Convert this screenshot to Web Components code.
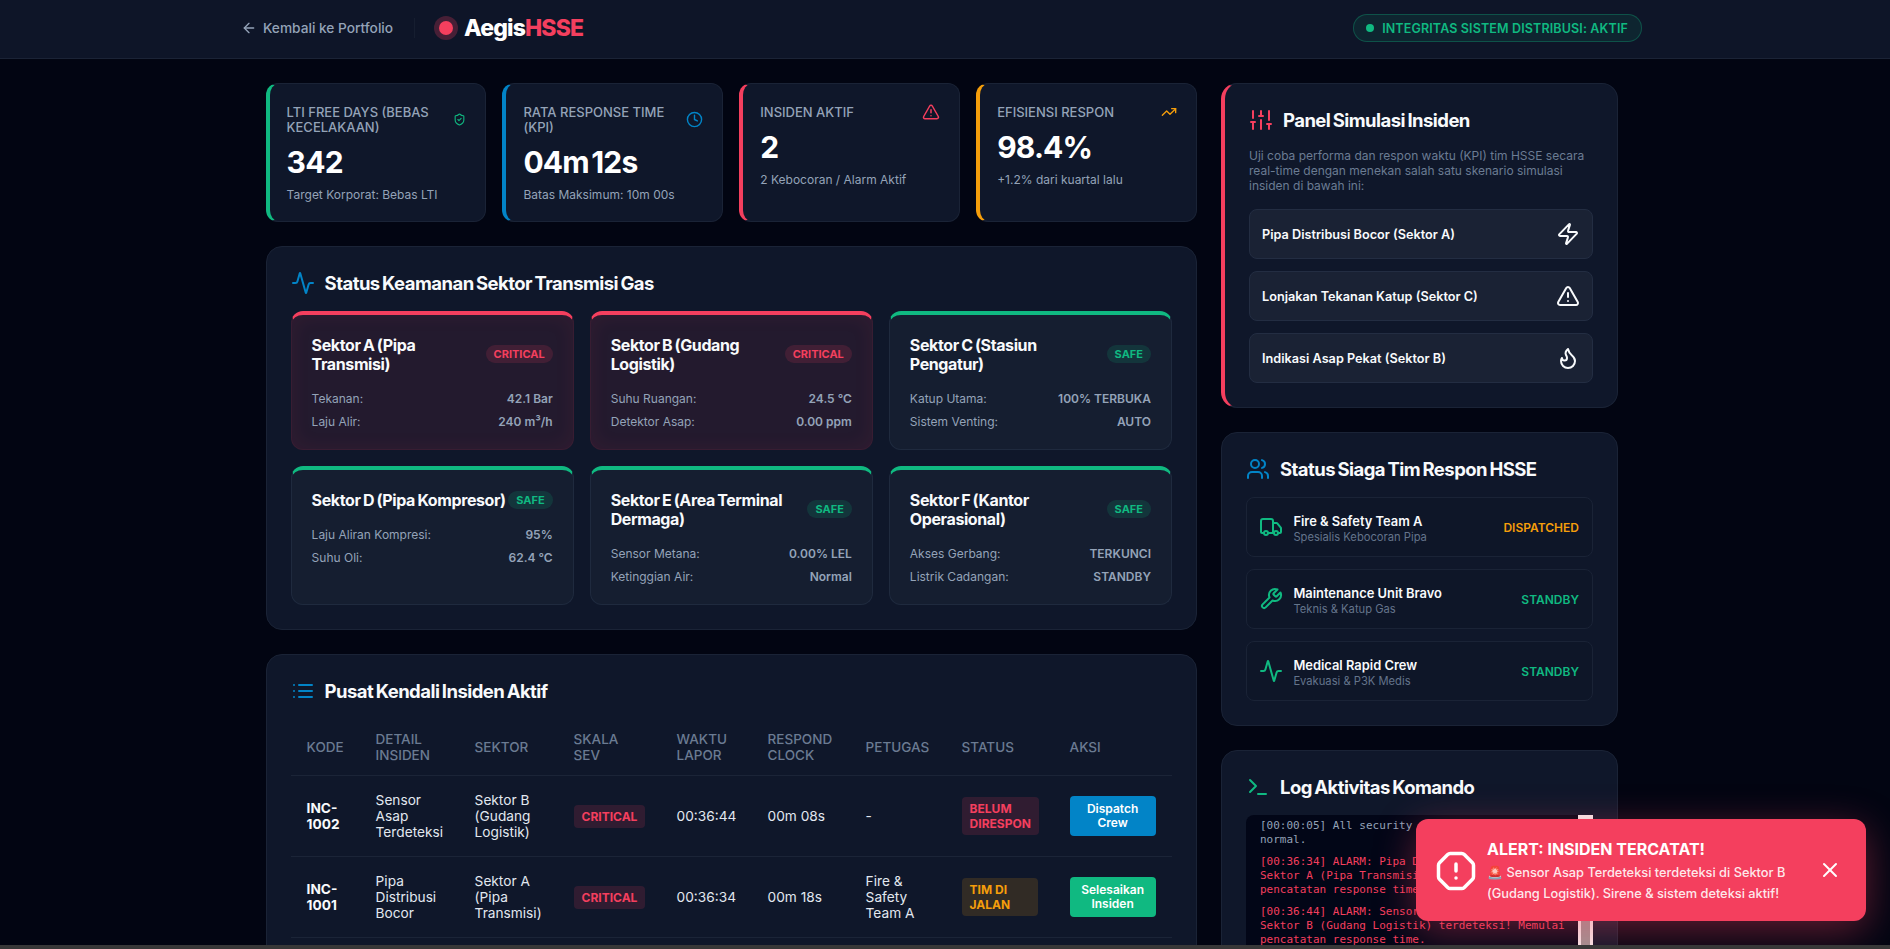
<!DOCTYPE html>
<html lang="id"><head><meta charset="utf-8"><title>AegisHSSE</title>
<style>
html,body{margin:0;padding:0;height:949px;overflow:hidden;background:#020512}
body{font-family:Inter,"Noto Sans",sans-serif;color:#f8fafc}
</style></head>
<body>
<aegis-app>
  <app-header></app-header>
  <div slot="left">
    <stat-grid>
      <stat-card accent="#10b981" icon="shield" icon-size="13" label="LTI FREE DAYS (BEBAS KECELAKAAN)" value="342" sub="Target Korporat: Bebas LTI"></stat-card>
      <stat-card accent="#0284c7" icon="clock" icon-size="17" label="RATA RESPONSE TIME (KPI)" value="04m 12s" sub="Batas Maksimum: 10m 00s"></stat-card>
      <stat-card accent="#f43f5e" icon="triangle" icon-size="18" label="INSIDEN AKTIF" value="2" sub="2 Kebocoran / Alarm Aktif"></stat-card>
      <stat-card accent="#f59e0b" icon="trending" icon-size="16" label="EFISIENSI RESPON" value="98.4%" sub="+1.2% dari kuartal lalu"></stat-card>
    </stat-grid>
    <panel-card icon="activity" icon-color="#0284c7" heading="Status Keamanan Sektor Transmisi Gas">
      <sector-grid>
        <sector-card state="critical" name="Sektor A (Pipa Transmisi)" a="Tekanan:" av="42.1 Bar" b="Laju Alir:" bv="240 m³/h"></sector-card>
        <sector-card state="critical" name="Sektor B (Gudang Logistik)" a="Suhu Ruangan:" av="24.5 °C" b="Detektor Asap:" bv="0.00 ppm"></sector-card>
        <sector-card state="safe" name="Sektor C (Stasiun Pengatur)" a="Katup Utama:" av="100% TERBUKA" b="Sistem Venting:" bv="AUTO"></sector-card>
        <sector-card state="safe" nowrap name="Sektor D (Pipa Kompresor)" a="Laju Aliran Kompresi:" av="95%" b="Suhu Oli:" bv="62.4 °C"></sector-card>
        <sector-card state="safe" name="Sektor E (Area Terminal Dermaga)" a="Sensor Metana:" av="0.00% LEL" b="Ketinggian Air:" bv="Normal"></sector-card>
        <sector-card state="safe" name="Sektor F (Kantor Operasional)" a="Akses Gerbang:" av="TERKUNCI" b="Listrik Cadangan:" bv="STANDBY"></sector-card>
      </sector-grid>
    </panel-card>
    <panel-card icon="list" icon-color="#0284c7" heading="Pusat Kendali Insiden Aktif">
      <incident-table></incident-table>
    </panel-card>
  </div>
  <div slot="right">
    <panel-card icon="sliders" icon-color="#f43f5e" heading="Panel Simulasi Insiden" alert>
      <sim-panel></sim-panel>
    </panel-card>
    <panel-card icon="users" icon-color="#0284c7" heading="Status Siaga Tim Respon HSSE">
      <team-list>
        <team-row icon="truck" name="Fire &amp; Safety Team A" role="Spesialis Kebocoran Pipa" status="DISPATCHED" tone="#f59e0b"></team-row>
        <team-row icon="wrench" name="Maintenance Unit Bravo" role="Teknis &amp; Katup Gas" status="STANDBY" tone="#10b981"></team-row>
        <team-row icon="activity" name="Medical Rapid Crew" role="Evakuasi &amp; P3K Medis" status="STANDBY" tone="#10b981"></team-row>
      </team-list>
    </panel-card>
    <panel-card icon="terminal" icon-color="#10b981" heading="Log Aktivitas Komando">
      <log-console></log-console>
    </panel-card>
  </div>
  <toast-alert slot="toast"></toast-alert>
</aegis-app>
<script>
const I={
arrow:'<path d="m12 19-7-7 7-7"/><path d="M19 12H5"/>',
shield:'<path d="M20 13c0 5-3.5 7.5-7.66 8.95a1 1 0 0 1-.67-.01C7.5 20.5 4 18 4 13V6a1 1 0 0 1 1-1c2 0 4.5-1.2 6.24-2.72a1.17 1.17 0 0 1 1.52 0C14.51 3.81 17 5 19 5a1 1 0 0 1 1 1z"/><path d="m9 12 2 2 4-4"/>',
clock:'<circle cx="12" cy="12" r="10"/><polyline points="12 6 12 12 16 14"/>',
triangle:'<path d="m21.73 18-8-14a2 2 0 0 0-3.48 0l-8 14A2 2 0 0 0 4 21h16a2 2 0 0 0 1.73-3"/><path d="M12 9v4"/><path d="M12 17h.01"/>',
trending:'<path d="M16 7h6v6"/><path d="m22 7-8.5 8.5-5-5L2 17"/>',
sliders:'<path d="M4 21v-7"/><path d="M4 10V3"/><path d="M12 21v-9"/><path d="M12 8V3"/><path d="M20 21v-5"/><path d="M20 12V3"/><path d="M2 14h4"/><path d="M10 8h4"/><path d="M18 16h4"/>',
zap:'<path d="M4 14a1 1 0 0 1-.78-1.63l9.9-10.2a.5.5 0 0 1 .86.46l-1.92 6.02A1 1 0 0 0 13 10h7a1 1 0 0 1 .78 1.63l-9.9 10.2a.5.5 0 0 1-.86-.46l1.92-6.02A1 1 0 0 0 11 14z"/>',
flame:'<path d="M8.5 14.5A2.5 2.5 0 0 0 11 12c0-1.38-.5-2-1-3-1.072-2.143-.224-4.054 2-6 .5 2.5 2 4.9 4 6.5 2 1.6 3 3.5 3 5.5a7 7 0 1 1-14 0c0-1.153.433-2.294 1-3a2.5 2.5 0 0 0 2.5 2.5z"/>',
activity:'<path d="M22 12h-2.48a2 2 0 0 0-1.93 1.46l-2.35 8.36a.25.25 0 0 1-.48 0L9.24 2.18a.25.25 0 0 0-.48 0l-2.35 8.36A2 2 0 0 1 4.49 12H2"/>',
list:'<path d="M3 6h.01"/><path d="M3 12h.01"/><path d="M3 18h.01"/><path d="M8 6h13"/><path d="M8 12h13"/><path d="M8 18h13"/>',
users:'<path d="M16 21v-2a4 4 0 0 0-4-4H6a4 4 0 0 0-4 4v2"/><circle cx="9" cy="7" r="4"/><path d="M22 21v-2a4 4 0 0 0-3-3.87"/><path d="M16 3.13a4 4 0 0 1 0 7.75"/>',
truck:'<path d="M14 18V6a2 2 0 0 0-2-2H4a2 2 0 0 0-2 2v11a1 1 0 0 0 1 1h2"/><path d="M15 18H9"/><path d="M19 18h2a1 1 0 0 0 1-1v-3.65a1 1 0 0 0-.22-.624l-3.48-4.35A1 1 0 0 0 17.52 8H14"/><circle cx="17" cy="18" r="2"/><circle cx="7" cy="18" r="2"/>',
wrench:'<path d="M14.7 6.3a1 1 0 0 0 0 1.4l1.6 1.6a1 1 0 0 0 1.4 0l3.77-3.77a6 6 0 0 1-7.94 7.94l-6.91 6.91a2.12 2.12 0 0 1-3-3l6.91-6.91a6 6 0 0 1 7.94-7.94l-3.76 3.76z"/>',
terminal:'<polyline points="4 17 10 11 4 5"/><line x1="12" x2="20" y1="19" y2="19"/>',
octagon:'<path d="M12 16h.01"/><path d="M12 8v4"/><path d="M15.312 2a2 2 0 0 1 1.414.586l4.688 4.688A2 2 0 0 1 22 8.688v6.624a2 2 0 0 1-.586 1.414l-4.688 4.688a2 2 0 0 1-1.414.586H8.688a2 2 0 0 1-1.414-.586l-4.688-4.688A2 2 0 0 1 2 15.312V8.688a2 2 0 0 1 .586-1.414l4.688-4.688A2 2 0 0 1 8.688 2z"/>',
x:'<path d="M18 6 6 18"/><path d="m6 6 12 12"/>'
};
const svg=(n,s,c,w=2)=>`<svg xmlns="http://www.w3.org/2000/svg" width="${s}" height="${s}" viewBox="0 0 24 24" fill="none" stroke="${c}" stroke-width="${w}" stroke-linecap="round" stroke-linejoin="round" style="display:block;flex:none">${I[n]}</svg>`;
const esc=s=>String(s).replace(/&/g,'&amp;');
function def(tag,render){
  customElements.define(tag,class extends HTMLElement{
    connectedCallback(){
      if(this.shadowRoot)return;
      const a=n=>this.getAttribute(n);
      this.attachShadow({mode:'open'}).innerHTML=render(a,this);
    }
  });
}
const head='font-family:Inter,sans-serif;font-weight:700;';

def('aegis-app',()=>`<style>
:host{display:flex;flex-direction:column;height:949px;position:relative;overflow:hidden}
.page{flex:1;min-height:0;overflow:hidden;position:relative}
.main{display:grid;grid-template-columns:931.4px 397px;column-gap:24px;padding:24px 0 0 265.6px}
::slotted([slot=left]){display:flex;flex-direction:column;gap:24px;min-width:0}
::slotted([slot=right]){display:flex;flex-direction:column;gap:24px;min-width:0}
.strip{height:4px;background:#383838;flex:none}
.toast{position:absolute;right:24px;bottom:24px;z-index:5}
</style><div class="page"><slot></slot><div class="main"><slot name="left"></slot><slot name="right"></slot></div><div class="toast"><slot name="toast"></slot></div></div><div class="strip"></div>`);

def('app-header',()=>`<style>
:host{display:flex;align-items:center;justify-content:space-between;height:56px;background:#0e1528;border-bottom:1px solid #1b2336;padding:0 248px 2px 241px;font-family:Inter,sans-serif}
.l{display:flex;align-items:center}
.back{display:flex;align-items:center;gap:6px;color:#94a3b8;font-size:13.7px;font-weight:500}
.div{width:1px;height:20px;background:#161e30;margin:0 16px 0 21px}
.dot{width:14px;height:14px;border-radius:50%;background:#f43f5e;box-shadow:0 0 0 5px rgba(244,63,94,.25);margin:0 11px 0 8px}
.logo{font-size:23px;font-weight:800;letter-spacing:-.85px;color:#fff}
.logo b{color:#f43f5e;font-weight:800}
.pill{display:flex;align-items:center;gap:8px;height:26px;padding:0 13px 0 12px;border:1px solid rgba(16,185,129,.3);background:rgba(16,185,129,.1);border-radius:14px;color:#10b981;font-size:12.5px;font-weight:600;letter-spacing:.14px}
.pill i{width:8px;height:8px;border-radius:50%;background:#10b981}
</style><div class="l"><div class="back">${svg('arrow',16,'#94a3b8')}<span>Kembali ke Portfolio</span></div><div class="div"></div><div class="dot"></div><div class="logo">Aegis<b>HSSE</b></div></div><div class="pill"><i></i><span>INTEGRITAS SISTEM DISTRIBUSI: AKTIF</span></div>`);

def('stat-grid',()=>`<style>:host{display:grid;grid-template-columns:repeat(4,1fr);gap:16px}</style><slot></slot>`);

def('stat-card',a=>`<style>
:host{display:block;box-sizing:border-box;background:#0f172a;border:1px solid #1a2336;border-left:4px solid ${a('accent')};border-radius:12px;padding:21px 19px 18px 17px}
.top{display:flex;justify-content:space-between;align-items:center;gap:8px}
.lab{font-size:13px;line-height:15px;font-weight:500;color:#94a3b8;flex:1;max-width:150px}
.ic{margin:-3px 0 -1px}
.val{${head}font-size:30px;line-height:40px;color:#fff;margin-top:7px;letter-spacing:-.8px;word-spacing:-4px}
.sub{font-size:12px;line-height:16px;color:#94a3b8;margin-top:5px}
</style><div class="top"><div class="lab">${a('label')}</div><div class="ic">${svg(a('icon'),a('icon-size'),a('accent'))}</div></div><div class="val">${a('value')}</div><div class="sub">${a('sub')}</div>`);

def('panel-card',(a,el)=>{const al=el.hasAttribute('alert');return `<style>
:host{display:block;background:#0f172a;border:1px solid #1a2336;${al?`border-left:4px solid #f43f5e;`:''}border-radius:16px;padding:24px;box-sizing:border-box}
.h{display:flex;align-items:center;gap:10px;height:24px;margin-bottom:16px}
h2{margin:0;${head}font-size:18.5px;line-height:24px;color:#f8fafc;letter-spacing:-.55px;word-spacing:-1.4px}
</style><div class="h">${svg(a('icon'),24,a('icon-color'))}<h2>${esc(a('heading'))}</h2></div><slot></slot>`});

def('sector-grid',()=>`<style>:host{display:grid;grid-template-columns:repeat(3,1fr);gap:16px}</style><slot></slot>`);

def('sector-card',(a,el)=>{const c=a('state')==='critical';const col=c?'#f43f5e':'#10b981';return `<style>
:host{display:block;box-sizing:border-box;border:1px solid ${c?'rgba(244,63,94,.1)':'#1f2a3e'};border-top:4px solid ${col};border-radius:12px;padding:21px 20px 18.6px;background:${c?'#231a2e':'#151e30'};${c?'box-shadow:inset 0 0 20px rgba(244,63,94,.08);':''}}
.t{display:flex;justify-content:space-between;align-items:center;gap:1px;margin-bottom:17px}
.n{${head}font-size:16px;line-height:19.2px;color:#f8fafc;letter-spacing:-.4px;word-spacing:-1px;${el.hasAttribute('nowrap')?'white-space:nowrap;':''}}
.b{flex:none;margin-top:-2px;font-size:11px;font-weight:700;line-height:18px;height:18px;padding:0 8px;border-radius:9px;color:${col};background:${c?'rgba(244,63,94,.15)':'rgba(16,185,129,.15)'}}
.r{display:flex;justify-content:space-between;font-size:12px;line-height:16px;color:#94a3b8}
.r+.r{margin-top:7px}
.r b{font-weight:600}
</style><div class="t"><div class="n">${a('name')}</div><div class="b">${c?'CRITICAL':'SAFE'}</div></div><div class="r"><span>${a('a')}</span><b>${a('av')}</b></div><div class="r"><span>${a('b')}</span><b>${a('bv')}</b></div>`});

def('incident-table',()=>`<style>
:host{display:block;margin-top:16px;font-family:Inter,sans-serif}
table{border-collapse:collapse;table-layout:fixed;width:881px;font-size:13.7px;line-height:16px;color:#e2e8f0}
th{font-weight:500;font-size:13.5px;color:#6b7b92;text-align:left;padding:12px 16px;border-bottom:1px solid #1b2437}
td{padding:16px;border-bottom:1px solid #1b2437;vertical-align:middle}
.k{font-weight:700;color:#f8fafc}
.s{display:inline-block;font-size:12px;font-weight:700;line-height:15px;padding:4px 8px;border-radius:4px;vertical-align:middle}
.red{color:#f43f5e;background:rgba(244,63,94,.15)}
.or{color:#f59e0b;background:rgba(245,158,11,.15)}
.btn{display:block;box-sizing:border-box;width:86px;height:40px;padding:6px 8px;border-radius:4px;color:#fff;font-size:12px;line-height:14px;font-weight:600;text-align:center}
</style><table><colgroup><col style="width:69px"><col style="width:99px"><col style="width:99px"><col style="width:103px"><col style="width:91px"><col style="width:98px"><col style="width:96px"><col style="width:108px"><col style="width:118px"></colgroup>
<thead><tr><th>KODE</th><th>DETAIL INSIDEN</th><th>SEKTOR</th><th>SKALA SEV</th><th>WAKTU LAPOR</th><th>RESPOND CLOCK</th><th>PETUGAS</th><th>STATUS</th><th>AKSI</th></tr></thead>
<tbody>
<tr><td class="k">INC-1002</td><td>Sensor Asap Terdeteksi</td><td>Sektor B (Gudang Logistik)</td><td><span class="s red">CRITICAL</span></td><td>00:36:44</td><td>00m 08s</td><td>-</td><td><span class="s red">BELUM DIRESPON</span></td><td><div class="btn" style="background:#0284c7">Dispatch Crew</div></td></tr>
<tr><td class="k">INC-1001</td><td>Pipa Distribusi Bocor</td><td>Sektor A (Pipa Transmisi)</td><td><span class="s red">CRITICAL</span></td><td>00:36:34</td><td>00m 18s</td><td>Fire &amp; Safety Team A</td><td><span class="s or">TIM DI JALAN</span></td><td><div class="btn" style="background:#10b981">Selesaikan Insiden</div></td></tr>
</tbody></table>`);

def('sim-panel',()=>`<style>
:host{display:block;font-family:Inter,sans-serif}
p{margin:0 0 16px;font-size:12px;line-height:15px;color:#6b7c93}
.b{display:flex;align-items:center;justify-content:space-between;box-sizing:border-box;height:50px;padding:0 12px;background:#1a2234;border:1px solid #232d42;border-radius:8px;font-size:12.7px;font-weight:600;color:#f8fafc}
.b+.b{margin-top:12px}
</style><p>Uji coba performa dan respon waktu (KPI) tim HSSE secara real-time dengan menekan salah satu skenario simulasi insiden di bawah ini:</p>
<div class="b"><span>Pipa Distribusi Bocor (Sektor A)</span>${svg('zap',24,'#f8fafc')}</div>
<div class="b"><span>Lonjakan Tekanan Katup (Sektor C)</span>${svg('triangle',24,'#f8fafc')}</div>
<div class="b"><span>Indikasi Asap Pekat (Sektor B)</span>${svg('flame',24,'#f8fafc')}</div>`);

def('team-list',()=>`<style>:host{display:flex;flex-direction:column;gap:12px}</style><slot></slot>`);

def('team-row',a=>`<style>
:host{display:flex;align-items:center;box-sizing:border-box;height:60px;padding:0 13px 0 12px;border:1px solid #1a2336;border-radius:8px;gap:10.4px;background:#0e1628}
.t{flex:1;min-width:0;padding-top:4px}
.n{font-size:12.9px;line-height:16px;font-weight:600;color:#f8fafc}
.r{font-size:11.2px;line-height:15px;color:#64748b}
.s{font-size:12px;font-weight:600;color:${a('tone')}}
</style>${svg(a('icon'),24,'#10b981')}<div class="t"><div class="n">${esc(a('name'))}</div><div class="r">${esc(a('role'))}</div></div><div class="s">${a('status')}</div>`);

def('log-console',()=>`<style>
:host{display:flex;height:140px;background:#020617;border-radius:8px 0 0 8px;overflow:hidden;font-family:"DejaVu Sans Mono","Liberation Mono",monospace;font-size:11px;line-height:14px}
.t{flex:1;min-width:0;padding:4px 12px 0 14px}
.e{margin-bottom:8px;color:#94a3b8}
.a{color:#f43f5e}
.sb{flex:none;width:9px;border:solid #f6ecec;border-width:8px 3px 0;background:#a09494}
</style><div class="t"><div class="e">[00:00:05] All security protocols operating normal.</div><div class="e a">[00:36:34] ALARM: Pipa Distribusi Bocor di Sektor A (Pipa Transmisi) terdeteksi! Memulai pencatatan response time.</div><div class="e a">[00:36:44] ALARM: Sensor Asap Terdeteksi di Sektor B (Gudang Logistik) terdeteksi! Memulai pencatatan response time.</div></div><div class="sb"></div>`);

def('toast-alert',()=>`<style>
:host{display:flex;align-items:center;box-sizing:border-box;width:450px;height:102px;padding:2px 24px 0 19px;background:#f43f5e;border-radius:12px;box-shadow:0 10px 40px rgba(244,63,94,.4);color:#fff;font-family:Inter,sans-serif}
.m{flex:1;margin-left:10px;min-width:0}
.h{${head}font-size:16px;line-height:20px}
.p{font-size:12.8px;line-height:21px;font-weight:500;color:rgba(255,255,255,.9);margin-top:3px}
.x{margin-left:18px;margin-bottom:2px}
</style>${svg('octagon',42,'#fff',2)}<div class="m"><div class="h">ALERT: INSIDEN TERCATAT!</div><div class="p">🚨 Sensor Asap Terdeteksi terdeteksi di Sektor B (Gudang Logistik). Sirene &amp; sistem deteksi aktif!</div></div><div class="x">${svg('x',24,'#fff')}</div>`);
</script>
</body></html>
